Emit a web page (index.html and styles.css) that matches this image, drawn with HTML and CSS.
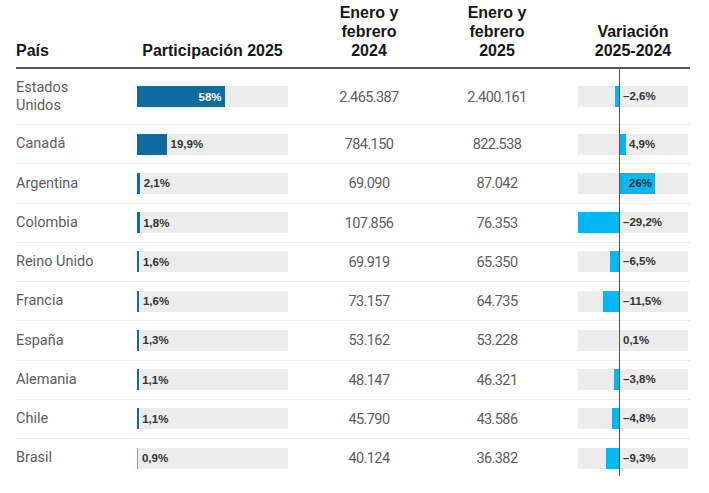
FILE: index.html
```html
<!DOCTYPE html>
<html lang="es">
<head>
<meta charset="utf-8">
<title>Participación 2025</title>
<link rel="stylesheet" href="styles.css">
</head>
<body>
<div class="table">
  <div class="row head">
    <div class="h">País</div>
    <div class="h center">Participación 2025</div>
    <div class="h center">Enero y<br>febrero<br>2024</div>
    <div class="h center">Enero y<br>febrero<br>2025</div>
    <div class="h"></div>
    <div class="h center">Variación<br>2025-2024</div>
  </div>
  <div class="body">
    <div class="row first">
      <div class="country">Estados<br>Unidos</div>
      <div class="track"><div class="fill inside" style="width:87.6px"><span class="lbl">58%</span></div></div>
      <div class="num">2.465.387</div>
      <div class="num">2.400.161</div>
      <div class="gap"></div>
      <div class="vtrack"><div class="vbar" style="left:37.4px;width:3.6px"></div><span class="vlbl" style="left:45px">–2,6%</span></div>
    </div>
    <div class="row">
      <div class="country">Canadá</div>
      <div class="track"><div class="fill" style="width:30px"></div><span class="lbl">19,9%</span></div>
      <div class="num">784.150</div>
      <div class="num">822.538</div>
      <div class="gap"></div>
      <div class="vtrack"><div class="vbar" style="left:41px;width:6.9px"></div><span class="vlbl" style="left:51px">4,9%</span></div>
    </div>
    <div class="row">
      <div class="country">Argentina</div>
      <div class="track"><div class="fill" style="width:3.2px"></div><span class="lbl">2,1%</span></div>
      <div class="num">69.090</div>
      <div class="num">87.042</div>
      <div class="gap"></div>
      <div class="vtrack"><div class="vbar" style="left:41px;width:36.4px"></div><span class="vlbl" style="left:51px">26%</span></div>
    </div>
    <div class="row">
      <div class="country">Colombia</div>
      <div class="track"><div class="fill" style="width:2.7px"></div><span class="lbl">1,8%</span></div>
      <div class="num">107.856</div>
      <div class="num">76.353</div>
      <div class="gap"></div>
      <div class="vtrack"><div class="vbar" style="left:0px;width:41px"></div><span class="vlbl" style="left:45px">–29,2%</span></div>
    </div>
    <div class="row">
      <div class="country">Reino Unido</div>
      <div class="track"><div class="fill" style="width:2.4px"></div><span class="lbl">1,6%</span></div>
      <div class="num">69.919</div>
      <div class="num">65.350</div>
      <div class="gap"></div>
      <div class="vtrack"><div class="vbar" style="left:31.9px;width:9.1px"></div><span class="vlbl" style="left:45px">–6,5%</span></div>
    </div>
    <div class="row">
      <div class="country">Francia</div>
      <div class="track"><div class="fill" style="width:2.4px"></div><span class="lbl">1,6%</span></div>
      <div class="num">73.157</div>
      <div class="num">64.735</div>
      <div class="gap"></div>
      <div class="vtrack"><div class="vbar" style="left:24.9px;width:16.1px"></div><span class="vlbl" style="left:45px">–11,5%</span></div>
    </div>
    <div class="row">
      <div class="country">España</div>
      <div class="track"><div class="fill" style="width:2px"></div><span class="lbl">1,3%</span></div>
      <div class="num">53.162</div>
      <div class="num">53.228</div>
      <div class="gap"></div>
      <div class="vtrack"><div class="vbar" style="left:41px;width:0.3px"></div><span class="vlbl" style="left:45px">0,1%</span></div>
    </div>
    <div class="row">
      <div class="country">Alemania</div>
      <div class="track"><div class="fill" style="width:1.7px"></div><span class="lbl">1,1%</span></div>
      <div class="num">48.147</div>
      <div class="num">46.321</div>
      <div class="gap"></div>
      <div class="vtrack"><div class="vbar" style="left:35.7px;width:5.3px"></div><span class="vlbl" style="left:45px">–3,8%</span></div>
    </div>
    <div class="row">
      <div class="country">Chile</div>
      <div class="track"><div class="fill" style="width:1.7px"></div><span class="lbl">1,1%</span></div>
      <div class="num">45.790</div>
      <div class="num">43.586</div>
      <div class="gap"></div>
      <div class="vtrack"><div class="vbar" style="left:34.3px;width:6.7px"></div><span class="vlbl" style="left:45px">–4,8%</span></div>
    </div>
    <div class="row last">
      <div class="country">Brasil</div>
      <div class="track"><div class="fill light" style="width:1.4px"></div><span class="lbl">0,9%</span></div>
      <div class="num">40.124</div>
      <div class="num">36.382</div>
      <div class="gap"></div>
      <div class="vtrack"><div class="vbar" style="left:28px;width:13px"></div><span class="vlbl" style="left:45px">–9,3%</span></div>
    </div>
  </div>
</div>
</body>
</html>
```

FILE: styles.css
```css
html, body {
  margin: 0;
  padding: 0;
  background: #ffffff;
}

.table {
  margin-left: 16px;
  width: 674px;
  font-family: Roboto, "Liberation Sans", sans-serif;
  color: #5a5a5a;
}

.row {
  display: grid;
  grid-template-columns: 121px 151px 162px 94px 34px 110px 2px;
  align-items: center;
  min-height: 38.25px;
  border-bottom: 1px solid #ececec;
}

.row.first {
  min-height: 55px;
}

.row.last {
  border-bottom: none;
}

.row.head {
  min-height: 0;
  height: 69px;
  align-items: end;
  border-bottom: 2px solid #555555;
  padding-bottom: 7px;
  box-sizing: border-box;
}

.h {
  font-family: "Liberation Sans", Arial, sans-serif;
  font-weight: 700;
  font-size: 16px;
  line-height: 19px;
  color: #161616;
}

.h.center {
  text-align: center;
}

.body {
  position: relative;
}

.body::after {
  content: "";
  position: absolute;
  left: 603px;
  top: 0;
  bottom: 1px;
  width: 1px;
  background: #555555;
}

.country {
  font-size: 14.5px;
  line-height: 17.5px;
  color: #5c5c5c;
}

.num {
  font-family: Roboto, sans-serif;
  font-size: 14.5px;
  letter-spacing: -0.6px;
  text-align: center;
  color: #5c5c5c;
  padding-top: 1px;
}

.track {
  display: flex;
  align-items: center;
  height: 21px;
  background: #ececec;
}

.fill {
  height: 21px;
  background: #0f6aa0;
  flex: none;
}

.fill.light {
  background: #6fa4c6;
}

.fill.inside {
  display: flex;
  align-items: center;
  justify-content: flex-end;
}

.lbl {
  font-family: "Liberation Sans", Arial, sans-serif;
  font-weight: 700;
  font-size: 11.5px;
  color: #333333;
  margin-left: 3.5px;
}

.fill.inside .lbl {
  color: #ffffff;
  margin-left: 0;
  margin-right: 3px;
}

.vtrack {
  position: relative;
  height: 21px;
  background: #ececec;
}

.vbar {
  position: absolute;
  top: 0;
  height: 21px;
  background: #00b9f2;
}

.vlbl {
  position: absolute;
  top: 0;
  line-height: 21px;
  font-family: "Liberation Sans", Arial, sans-serif;
  font-weight: 700;
  font-size: 11.5px;
  color: #333333;
  white-space: nowrap;
}
```
